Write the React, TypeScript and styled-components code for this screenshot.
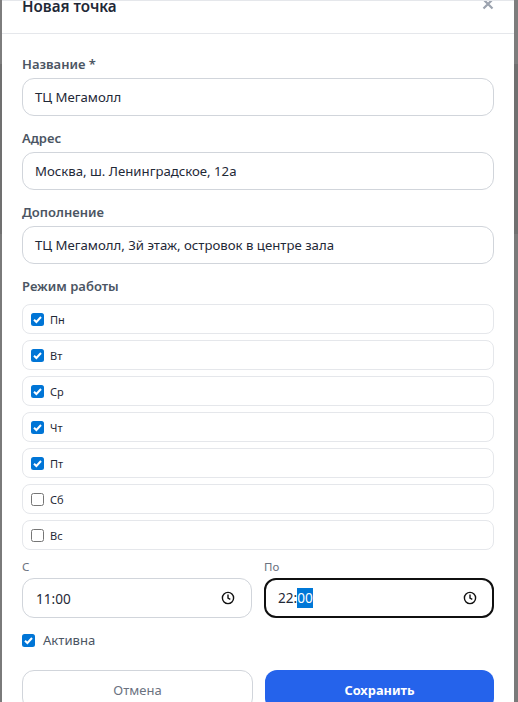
import React from "react";
import styled, { createGlobalStyle } from "styled-components";

const Global = createGlobalStyle`
  html, body {
    margin: 0; padding: 0; height: 702px; overflow: hidden;
    background: linear-gradient(#7d7d7d 0 64px, #707070 64px 234px, #7a7a7a 234px);
  }
  * { box-sizing: border-box; }
`;
const Modal = styled.div`
  width: 512px; height: 702px; margin-left: 2px; background: #fff; overflow: hidden;
  border-top: 1px solid #e5e7eb;
  font-family: "Noto Sans", "Open Sans", sans-serif; color: #111827;
`;
const Header = styled.header`
  height: 38px; margin-top: -6px; padding: 0 20px; display: flex; justify-content: space-between;
  border-bottom: 1px solid #e5e7eb; box-sizing: content-box;
`;
const Title = styled.h2`
  margin: 0; font-size: 15.2px; line-height: 22px; font-weight: 600; color: #1f2937;
`;
const Close = styled.span`display: block; margin: 2px -1px 0 0; color: #9ca3af; line-height: 0;`;
const Body = styled.div`padding: 20px 20px 0; display: flex; flex-direction: column;`;
const Label = styled.label<{ $gap?: number }>`
  display: block; height: 20px; margin-bottom: ${p => p.$gap ?? 4}px; font-size: 13px; line-height: 20px; font-weight: 600; color: #4b5563;
`;
const Field = styled.div`margin-bottom: 12px;`;
const TextBox = styled.div`
  height: 38px; border: 1px solid #d1d5db; border-radius: 12px; padding: 0 12px;
  display: flex; align-items: center; font-size: 13.2px; color: #1f2937;
`;
const Days = styled.div`display: flex; flex-direction: column; gap: 6px;`;
const Day = styled.div`
  height: 30px; border: 1px solid #e5e7eb; border-radius: 8px; padding: 0 8px;
  display: flex; align-items: center; gap: 6px; font-size: 11px; color: #1f2937;
`;
const Box = styled.span<{ $on: boolean }>`
  width: 13px; height: 13px; border-radius: 2.5px; flex: none; display: flex; align-items: center; justify-content: center;
  background: ${p => (p.$on ? "#0075d6" : "#fff")};
  border: ${p => (p.$on ? "none" : "1px solid #767676")};
`;
const TimeRow = styled.div`display: grid; grid-template-columns: 1fr 1fr; gap: 12px; margin-top: 8px;`;
const TimeLabel = styled.div`height: 20px; font-size: 11.5px; line-height: 18px; color: #6b7280;`;
const TimeBox = styled.div<{ $focus?: boolean }>`
  height: 40px; border-radius: 12px;
  border: ${p => (p.$focus ? "2px solid #101010" : "1px solid #d1d5db")};
  padding: 0 ${p => (p.$focus ? "15px" : "16px")} 0 ${p => (p.$focus ? "12px" : "13px")};
  display: flex; align-items: center; justify-content: space-between; font-size: 13.6px; color: #1f2937;
`;
const Selected = styled.span`background: #0078d7; color: #fff; line-height: 20px; display: inline-block;`;
const Active = styled.div`
  display: flex; align-items: center; gap: 8px; height: 20px; margin-top: 12px; font-size: 13.1px; color: #4b5563;
`;
const Actions = styled.div`display: grid; grid-template-columns: 231px 229px; gap: 12px; margin-top: 20px;`;
const Cancel = styled.button`
  height: 40px; border: 1px solid #d1d5db; border-radius: 12px; background: #fff; color: #6b7280;
  font: 400 13px "Noto Sans", sans-serif;
`;
const Save = styled.button`
  height: 40px; border: none; border-radius: 12px; background: #2563eb; color: #fff;
  font: 700 12.8px "Noto Sans", sans-serif;
`;

const Check = () => (
  <svg width="11" height="11" viewBox="0 0 11 11"><path d="M2 5.7 L4.4 8 L9 3" fill="none" stroke="#fff" strokeWidth="2" /></svg>
);
const Clock = () => (
  <svg width="14" height="14" viewBox="0 0 14 14" fill="none" stroke="#111" strokeWidth="1.4">
    <circle cx="7" cy="7" r="5.6" /><path d="M7 3.6 V7.2 L9.3 8.4" />
  </svg>
);
const fields = [
  ["Название *", "ТЦ Мегамолл"],
  ["Адрес", "Москва, ш. Ленинградское, 12а"],
  ["Дополнение", "ТЦ Мегамолл, 3й этаж, островок в центре зала"],
];
const days = [["Пн", true], ["Вт", true], ["Ср", true], ["Чт", true], ["Пт", true], ["Сб", false], ["Вс", false]] as const;

export default function App() {
  return (
    <>
      <Global />
      <Modal>
        <Header>
          <Title>Новая точка</Title>
          <Close>
            <svg width="14" height="14" viewBox="0 0 14 14" fill="none" stroke="currentColor" strokeWidth="2.2"><path d="M2.5 2.5 L11.5 11.5 M11.5 2.5 L2.5 11.5" /></svg>
          </Close>
        </Header>
        <Body>
          {fields.map(([l, v]) => (
            <Field key={l}><Label>{l}</Label><TextBox>{v}</TextBox></Field>
          ))}
          <Label $gap={8}>Режим работы</Label>
          <Days>
            {days.map(([d, on]) => (
              <Day key={d}><Box $on={on}>{on && <Check />}</Box>{d}</Day>
            ))}
          </Days>
          <TimeRow>
            <div><TimeLabel>С</TimeLabel><TimeBox><span>11:00</span><Clock /></TimeBox></div>
            <div><TimeLabel>По</TimeLabel><TimeBox $focus><span>22:<Selected>00</Selected></span><Clock /></TimeBox></div>
          </TimeRow>
          <Active><Box $on><Check /></Box>Активна</Active>
          <Actions><Cancel>Отмена</Cancel><Save>Сохранить</Save></Actions>
        </Body>
      </Modal>
    </>
  );
}
